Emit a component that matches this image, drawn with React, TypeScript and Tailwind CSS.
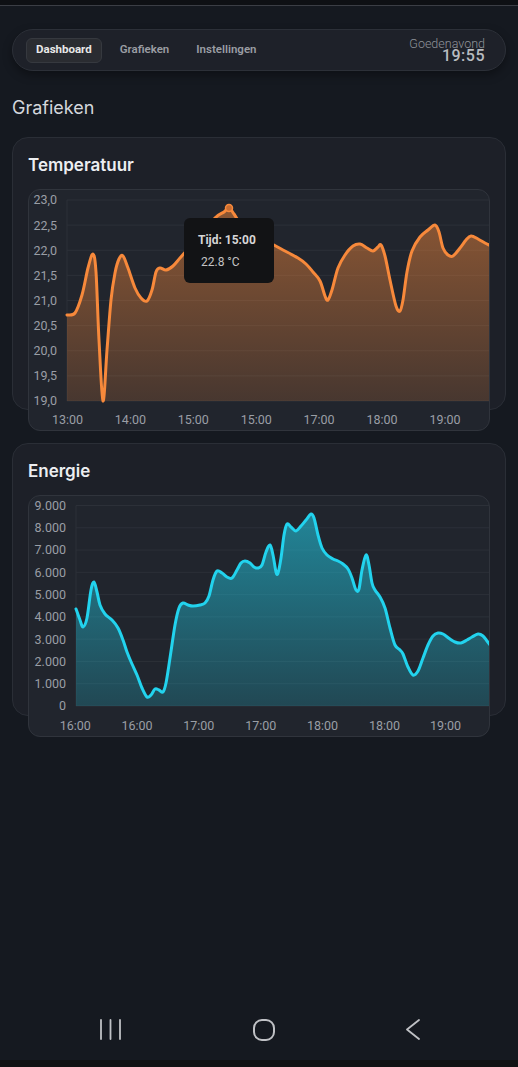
import React from "react";

type Pt = [number, number];

// catmull-rom points -> cubic bezier path
const smoothPath = (pts: Pt[]) => {
  let d = `M${pts[0][0]},${pts[0][1]}`;
  for (let i = 0; i < pts.length - 1; i++) {
    const p0 = pts[i - 1] ?? pts[i];
    const p1 = pts[i];
    const p2 = pts[i + 1];
    const p3 = pts[i + 2] ?? p2;
    const c1x = p1[0] + (p2[0] - p0[0]) / 6;
    const c1y = p1[1] + (p2[1] - p0[1]) / 6;
    const c2x = p2[0] - (p3[0] - p1[0]) / 6;
    const c2y = p2[1] - (p3[1] - p1[1]) / 6;
    d += ` C${c1x.toFixed(1)},${c1y.toFixed(1)} ${c2x.toFixed(1)},${c2y.toFixed(1)} ${p2[0]},${p2[1]}`;
  }
  return d;
};

const TEMP_POINTS: Pt[] = [
  [67, 315], [75, 313], [82, 295], [88, 268], [93, 254], [96, 272], [99, 340],
  [103, 401], [107, 350], [111, 300], [115, 273], [119, 259], [123, 256],
  [128, 268], [135, 288], [141, 298], [147, 301], [152, 290], [156, 272],
  [160, 268], [166, 270], [173, 266], [180, 258], [190, 247], [202, 236],
  [215, 218], [224, 212], [229, 208], [234, 214], [242, 226], [255, 236],
  [270, 243], [283, 250], [298, 258], [306, 264], [313, 272], [320, 281],
  [325, 296], [328, 300], [332, 290], [338, 268], [345, 255], [353, 246],
  [360, 244], [367, 248], [373, 251], [378, 247], [381, 245], [385, 256],
  [390, 280], [396, 306], [400, 311], [403, 300], [407, 272], [412, 251],
  [420, 237], [428, 230], [435, 225], [439, 232], [443, 248], [448, 255],
  [453, 256], [460, 248], [466, 240], [471, 236], [478, 239], [485, 243],
  [491, 246],
];

const ENERGY_POINTS: Pt[] = [
  [76, 609], [80, 620], [83, 627], [87, 618], [91, 590], [94, 582], [97, 592],
  [100, 605], [105, 614], [112, 620], [118, 628], [123, 640], [127, 652],
  [132, 664], [137, 675], [142, 688], [147, 697], [151, 695], [155, 689],
  [159, 690], [163, 692], [166, 683], [170, 658], [175, 625], [179, 608],
  [183, 603], [188, 605], [193, 606], [200, 605], [205, 603], [209, 596],
  [213, 580], [217, 571], [222, 573], [227, 577], [232, 578], [237, 570],
  [241, 563], [245, 561], [250, 563], [254, 567], [258, 568], [262, 565],
  [266, 552], [270, 545], [273, 555], [276, 572], [278, 573], [281, 558],
  [284, 535], [287, 524], [291, 527], [296, 531], [301, 526], [306, 520],
  [311, 514], [314, 518], [318, 535], [322, 548], [327, 555], [333, 559],
  [338, 561], [343, 564], [348, 569], [352, 578], [356, 590], [359, 589],
  [362, 570], [366, 555], [369, 565], [372, 583], [375, 590], [380, 597],
  [385, 608], [390, 628], [395, 645], [400, 650], [403, 654], [408, 667],
  [413, 675], [418, 671], [423, 658], [428, 645], [433, 636], [438, 633],
  [443, 634], [450, 639], [455, 642], [461, 643], [467, 640], [472, 637],
  [478, 634], [483, 636], [487, 641], [491, 646],
];

interface ChartProps {
  id: string;
  origin: Pt;
  plotLeft: number;
  plotTop: number;
  plotBottom: number;
  yLabels: string[];
  xTicks: { x: number; label: string }[];
  xLabelY: number;
  points: Pt[];
  color: string;
  fillTop: number;
  fillBottom: number;
  children?: React.ReactNode;
}

const PLOT_RIGHT = 491;

const AreaChart = ({
  id,
  origin,
  plotLeft,
  plotTop,
  plotBottom,
  yLabels,
  xTicks,
  xLabelY,
  points,
  color,
  fillTop,
  fillBottom,
  children,
}: ChartProps) => {
  const line = smoothPath(points);
  const area = `${line} L${points[points.length - 1][0]},${plotBottom} L${points[0][0]},${plotBottom} Z`;
  const step = (plotBottom - plotTop) / (yLabels.length - 1);

  return (
    <svg
      width={460}
      height={240}
      viewBox={`${origin[0]} ${origin[1]} 460 240`}
      className="block"
      style={{ fontFamily: "Roboto, 'Liberation Sans', sans-serif" }}
    >
      <defs>
        <linearGradient id={id} x1="0" y1="0" x2="0" y2="1">
          <stop offset="0%" stopColor={color} stopOpacity={fillTop} />
          <stop offset="100%" stopColor={color} stopOpacity={fillBottom} />
        </linearGradient>
      </defs>

      {yLabels.map((label, i) => {
        const y = plotTop + i * step;
        return (
          <g key={label}>
            <line x1={plotLeft} x2={PLOT_RIGHT} y1={y} y2={y} stroke="#2c3038" strokeWidth={1} />
            <text x={plotLeft - 10} y={y} dy="0.35em" textAnchor="end" fontSize={12.5} fill="#9a9ea5">
              {label}
            </text>
          </g>
        );
      })}
      <line x1={plotLeft} x2={plotLeft} y1={plotTop} y2={plotBottom} stroke="#2c3038" strokeWidth={1} />

      <path d={area} fill={`url(#${id})`} />
      <path d={line} fill="none" stroke={color} strokeWidth={3} strokeLinejoin="round" strokeLinecap="round" />

      {xTicks.map((t, i) => (
        <text key={i} x={t.x} y={xLabelY} dy="0.35em" textAnchor="middle" fontSize={12.5} fill="#9a9ea5">
          {t.label}
        </text>
      ))}
      {children}
    </svg>
  );
};

const ChartCard = ({ title, children }: { title: string; children: React.ReactNode }) => (
  <div className="h-[273px] rounded-2xl border border-[#2a2e36] bg-[#1d2028] px-[15px] py-[15px]">
    <h2
      className="mb-3 text-[17px] font-semibold leading-6 text-[#eceef1]"
      style={{ fontFamily: "Inter, 'Noto Sans', sans-serif" }}
    >
      {title}
    </h2>
    <div className="relative h-[242px] rounded-xl border border-[#30343c] bg-[#21252d]">{children}</div>
  </div>
);

const App = () => {
  return (
    <div
      className="flex h-[1067px] flex-col overflow-hidden bg-[#151920]"
      style={{ fontFamily: "Roboto, 'Liberation Sans', sans-serif" }}
    >
      <div className="h-[6px] border-b border-[#3b3e45] bg-[#0e1014]" />

      <div className="px-3">
        {/* Navbar */}
        <nav className="mt-[23px] flex h-[42px] items-center rounded-full border border-[#2c3038] bg-[#1e2129] pl-[13px] pr-[20px] shadow-[0_4px_10px_rgba(0,0,0,0.35)]">
          <button className="h-[25px] rounded-md border border-[#36393f] bg-[#2a2c31] px-[9px] text-[11.5px] font-bold text-[#e8e8e8]">
            Dashboard
          </button>
          <button className="ml-[18px] text-[11.5px] font-semibold text-[#9a9da3]">Grafieken</button>
          <button className="ml-[27px] text-[11.5px] font-semibold text-[#9a9da3]">Instellingen</button>
          <div className="ml-auto flex flex-col items-end leading-none">
            <span className="pt-[2px] text-[12.5px] font-light text-[#8f9399]">Goedenavond</span>
            <span className="-mt-[2px] text-[16px] font-medium tracking-[0.5px] text-[#b8bbc0]">19:55</span>
          </div>
        </nav>

        <h1
          className="mt-[23px] text-[18px] font-normal leading-7 text-[#d4d7dc]"
          style={{ fontFamily: "Inter, 'Noto Sans', sans-serif" }}
        >
          Grafieken
        </h1>

        <div className="mt-[15px]">
          <ChartCard title="Temperatuur">
            <AreaChart
              id="tempFill"
              origin={[29, 190]}
              plotLeft={67}
              plotTop={200}
              plotBottom={401}
              yLabels={["23,0", "22,5", "22,0", "21,5", "21,0", "20,5", "20,0", "19,5", "19,0"]}
              xTicks={[
                { x: 67.5, label: "13:00" },
                { x: 130.4, label: "14:00" },
                { x: 193.3, label: "15:00" },
                { x: 256.2, label: "15:00" },
                { x: 319.1, label: "17:00" },
                { x: 382, label: "18:00" },
                { x: 445, label: "19:00" },
              ]}
              xLabelY={420}
              points={TEMP_POINTS}
              color="#f7893b"
              fillTop={0.5}
              fillBottom={0.18}
            >
              <circle cx={229} cy={208} r={3.5} fill="#c86d31" stroke="#f7893b" strokeWidth={1.5} />
            </AreaChart>
            {/* Tooltip */}
            <div className="absolute left-[155px] top-[28px] h-[65px] w-[90px] rounded-md bg-[#121315] pl-[14px] pt-[11px] text-[12px] leading-[22px]">
              <p className="font-bold text-[#d6d6d6]">Tijd: 15:00</p>
              <p className="pl-[3px] text-[#c4c4c4]">22.8 °C</p>
            </div>
          </ChartCard>
        </div>

        <div className="mt-[33px]">
          <ChartCard title="Energie">
            <AreaChart
              id="energyFill"
              origin={[29, 496]}
              plotLeft={76}
              plotTop={505.5}
              plotBottom={706}
              yLabels={["9.000", "8.000", "7.000", "6.000", "5.000", "4.000", "3.000", "2.000", "1.000", "0"]}
              xTicks={[
                { x: 75.3, label: "16:00" },
                { x: 137, label: "16:00" },
                { x: 198.8, label: "17:00" },
                { x: 260.7, label: "17:00" },
                { x: 322.6, label: "18:00" },
                { x: 384.5, label: "18:00" },
                { x: 445.5, label: "19:00" },
              ]}
              xLabelY={725.5}
              points={ENERGY_POINTS}
              color="#22d3ee"
              fillTop={0.55}
              fillBottom={0.2}
            />
          </ChartCard>
        </div>
      </div>

      {/* Android navigation bar */}
      <div className="mt-auto flex h-[61px] items-center justify-between pl-[100px] pr-[98px]">
        <svg width="21" height="21" viewBox="0 0 21 21" fill="none" stroke="#bfc1c5" strokeWidth="1.8" strokeLinecap="round">
          <line x1="1" y1="1" x2="1" y2="20" />
          <line x1="10.5" y1="1" x2="10.5" y2="20" />
          <line x1="20" y1="1" x2="20" y2="20" />
        </svg>
        <svg width="22" height="22" viewBox="0 0 22 22" fill="none" stroke="#bfc1c5" strokeWidth="2">
          <rect x="1" y="1" width="20" height="20" rx="8" />
        </svg>
        <svg width="14" height="21" viewBox="0 0 14 21" fill="none" stroke="#bfc1c5" strokeWidth="1.8" strokeLinecap="round" strokeLinejoin="round">
          <polyline points="13,1 1,10.5 13,20" />
        </svg>
      </div>
      <div className="h-[7px] bg-[#111214]" />
    </div>
  );
};

export default App;
